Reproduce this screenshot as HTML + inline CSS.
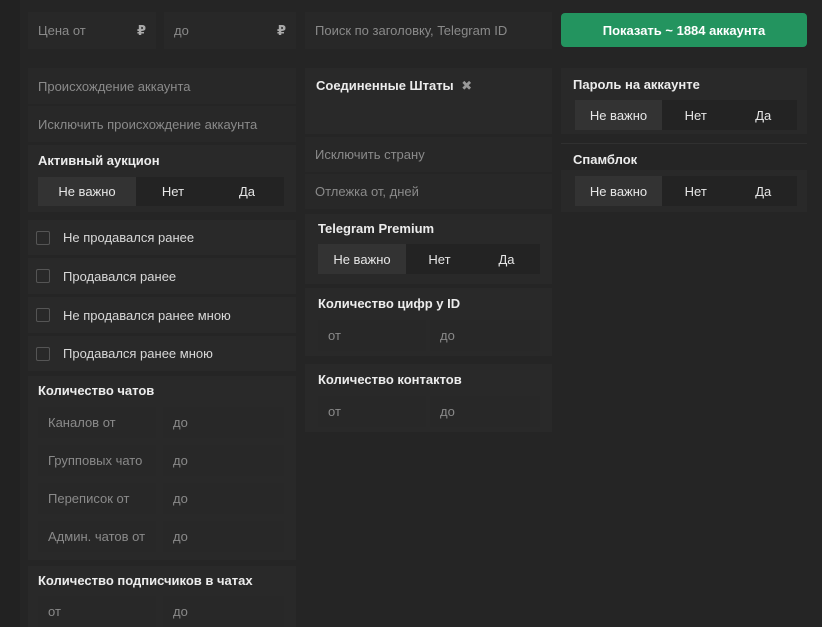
<!DOCTYPE html>
<html><head><meta charset="utf-8"><style>
*{box-sizing:border-box;margin:0;padding:0}
body{width:822px;height:627px;background:#252525;font-family:"Liberation Sans","DejaVu Sans",sans-serif;font-size:13px;position:relative;overflow:hidden;color:#8c8c8c}
.strip{position:absolute;left:0;top:0;width:20px;height:627px;background:#222}
.b{position:absolute;background:#292929}
.i{position:absolute;background:#282828;color:#8a8a8a;padding-left:10px;display:flex;align-items:center}
.t{position:absolute;color:#ececec;font-weight:bold;font-size:13px}
.seg{position:absolute;background:#232323;display:flex;color:#e6e6e6;font-size:13px}
.seg div{flex:1;display:flex;align-items:center;justify-content:center}
.seg .a{background:#333}
.cb{position:absolute;display:flex;align-items:center;color:#d8d8d8;font-size:13px;background:#292929}
.cb span{width:14px;height:14px;border:1.5px solid #555;border-radius:2px;margin:0 13px 0 8px}
</style></head><body>
<div class="strip"></div>
<div class="i" style="left:28px;top:12px;width:128px;height:37px">Цена от<b style="margin-left:auto;margin-right:10px;color:#aaa">₽</b></div>
<div class="i" style="left:164px;top:12px;width:132px;height:37px">до<b style="margin-left:auto;margin-right:10px;color:#aaa">₽</b></div>
<div class="i" style="left:305px;top:12px;width:247px;height:37px">Поиск по заголовку, Telegram ID</div>
<div style="position:absolute;left:561px;top:13px;width:246px;height:34px;background:#23945f;border-radius:4px;color:#fff;font-weight:bold;display:flex;align-items:center;justify-content:center">Показать ~ 1884 аккаунта</div>

<div class="i" style="left:28px;top:68px;width:268px;height:36px">Происхождение аккаунта</div>
<div class="i" style="left:28px;top:106px;width:268px;height:36px">Исключить происхождение аккаунта</div>
<div class="b" style="left:28px;top:145px;width:268px;height:67px"></div>
<div class="t" style="left:38px;top:153px">Активный аукцион</div>
<div class="seg" style="left:38px;top:177px;width:246px;height:29px"><div class="a" style="flex:0 0 98px">Не важно</div><div>Нет</div><div>Да</div></div>

<div class="cb" style="left:28px;top:220px;width:268px;height:35px"><span></span>Не продавался ранее</div>
<div class="cb" style="left:28px;top:258px;width:268px;height:36px"><span></span>Продавался ранее</div>
<div class="cb" style="left:28px;top:297px;width:268px;height:36px"><span></span>Не продавался ранее мною</div>
<div class="cb" style="left:28px;top:336px;width:268px;height:35px"><span></span>Продавался ранее мною</div>

<div class="b" style="left:28px;top:376px;width:268px;height:184px"></div>
<div class="t" style="left:38px;top:383px">Количество чатов</div>
<div class="i" style="left:38px;top:407px;width:118px;height:31px">Каналов от</div><div class="i" style="left:163px;top:407px;width:121px;height:31px">до</div>
<div class="i" style="left:38px;top:445px;width:118px;height:31px">Групповых чато</div><div class="i" style="left:163px;top:445px;width:121px;height:31px">до</div>
<div class="i" style="left:38px;top:483px;width:118px;height:31px">Переписок от</div><div class="i" style="left:163px;top:483px;width:121px;height:31px">до</div>
<div class="i" style="left:38px;top:521px;width:118px;height:31px">Админ. чатов от</div><div class="i" style="left:163px;top:521px;width:121px;height:31px">до</div>

<div class="b" style="left:28px;top:566px;width:268px;height:61px"></div>
<div class="t" style="left:38px;top:573px">Количество подписчиков в чатах</div>
<div class="i" style="left:38px;top:596px;width:118px;height:31px">от</div><div class="i" style="left:163px;top:596px;width:121px;height:31px">до</div>

<div class="b" style="left:305px;top:68px;width:247px;height:66px"></div>
<div class="t" style="left:316px;top:78px">Соединенные Штаты <span style="color:#999;margin-left:4px">✖</span></div>
<div class="i" style="left:305px;top:137px;width:247px;height:35px">Исключить страну</div>
<div class="i" style="left:305px;top:174px;width:247px;height:35px">Отлежка от, дней</div>
<div class="b" style="left:305px;top:214px;width:247px;height:70px"></div>
<div class="t" style="left:318px;top:221px">Telegram Premium</div>
<div class="seg" style="left:318px;top:244px;width:222px;height:30px"><div class="a" style="flex:0 0 88px">Не важно</div><div>Нет</div><div>Да</div></div>
<div class="b" style="left:305px;top:288px;width:247px;height:68px"></div>
<div class="t" style="left:318px;top:296px">Количество цифр у ID</div>
<div class="i" style="left:318px;top:320px;width:108px;height:31px">от</div><div class="i" style="left:430px;top:320px;width:110px;height:31px">до</div>
<div class="b" style="left:305px;top:364px;width:247px;height:68px"></div>
<div class="t" style="left:318px;top:372px">Количество контактов</div>
<div class="i" style="left:318px;top:396px;width:108px;height:31px">от</div><div class="i" style="left:430px;top:396px;width:110px;height:31px">до</div>

<div class="b" style="left:561px;top:68px;width:246px;height:66px"></div>
<div class="t" style="left:573px;top:77px">Пароль на аккаунте</div>
<div class="seg" style="left:575px;top:100px;width:222px;height:30px"><div class="a" style="flex:0 0 87px">Не важно</div><div>Нет</div><div>Да</div></div>
<div style="position:absolute;left:561px;top:143px;width:246px;height:1px;background:#303030"></div>
<div class="b" style="left:561px;top:170px;width:246px;height:42px"></div>
<div class="t" style="left:573px;top:152px">Спамблок</div>
<div class="seg" style="left:575px;top:176px;width:222px;height:30px"><div class="a" style="flex:0 0 87px">Не важно</div><div>Нет</div><div>Да</div></div>
</body></html>
